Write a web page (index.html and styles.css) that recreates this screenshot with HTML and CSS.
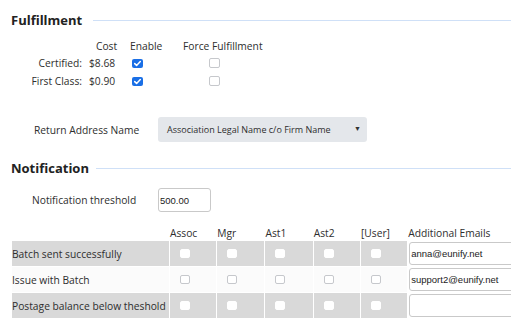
FILE: index.html
```html
<!DOCTYPE html>
<html>
<head>
<meta charset="utf-8">
<link rel="stylesheet" href="styles.css">
</head>
<body>
<div class="page">
  <h2 class="section-title">Fulfillment</h2>
  <div class="ful-grid">
    <div></div>
    <div class="ful-head cost-head">Cost</div>
    <div class="ful-head">Enable</div>
    <div class="ful-head">Force Fulfillment</div>

    <div class="ful-label">Certified:</div>
    <div class="ful-cost">$8.68</div>
    <div class="ful-enable"><span class="cb cb-on"><svg viewBox="0 0 11 9" width="11" height="9"><path d="M2.7 4.6 L4.6 6.4 L8.3 2.6" fill="none" stroke="#fff" stroke-width="1.5" stroke-linecap="round" stroke-linejoin="round"/></svg></span></div>
    <div class="ful-force"><span class="cb"></span></div>

    <div class="ful-label">First Class:</div>
    <div class="ful-cost">$0.90</div>
    <div class="ful-enable"><span class="cb cb-on"><svg viewBox="0 0 11 9" width="11" height="9"><path d="M2.7 4.6 L4.6 6.4 L8.3 2.6" fill="none" stroke="#fff" stroke-width="1.5" stroke-linecap="round" stroke-linejoin="round"/></svg></span></div>
    <div class="ful-force"><span class="cb"></span></div>
  </div>

  <div class="form-row return-row">
    <label class="form-label label-return">Return Address Name</label>
    <div class="select">
      <span class="select-text">Association Legal Name c/o Firm Name</span>
      <span class="select-arrow">&#9660;</span>
    </div>
  </div>

  <h2 class="section-title notif-title">Notification</h2>

  <div class="form-row threshold-row">
    <label class="form-label label-threshold">Notification threshold</label>
    <div class="text-input threshold-input">500.00</div>
  </div>

  <table class="notif-table">
    <colgroup>
      <col class="c-label"><col class="c-a"><col class="c-b"><col class="c-b"><col class="c-a"><col class="c-a"><col class="c-email">
    </colgroup>
    <thead>
      <tr><th></th><th>Assoc</th><th>Mgr</th><th>Ast1</th><th>Ast2</th><th>[User]</th><th>Additional Emails</th></tr>
    </thead>
    <tbody>
      <tr class="row-gray">
        <td class="row-label">Batch sent successfully</td>
        <td class="cb-cell"><span class="cb cb-white"></span></td>
        <td class="cb-cell"><span class="cb cb-white"></span></td>
        <td class="cb-cell"><span class="cb cb-white"></span></td>
        <td class="cb-cell"><span class="cb cb-white"></span></td>
        <td class="cb-cell"><span class="cb cb-white"></span></td>
        <td class="email-cell"><div class="text-input email-input">anna@eunify.net</div></td>
      </tr>
      <tr class="row-light">
        <td class="row-label">Issue with Batch</td>
        <td class="cb-cell"><span class="cb"></span></td>
        <td class="cb-cell"><span class="cb"></span></td>
        <td class="cb-cell"><span class="cb"></span></td>
        <td class="cb-cell"><span class="cb"></span></td>
        <td class="cb-cell"><span class="cb"></span></td>
        <td class="email-cell"><div class="text-input email-input">support2@eunify.net</div></td>
      </tr>
      <tr class="row-gray">
        <td class="row-label">Postage balance below theshold</td>
        <td class="cb-cell"><span class="cb cb-white"></span></td>
        <td class="cb-cell"><span class="cb cb-white"></span></td>
        <td class="cb-cell"><span class="cb cb-white"></span></td>
        <td class="cb-cell"><span class="cb cb-white"></span></td>
        <td class="cb-cell"><span class="cb cb-white"></span></td>
        <td class="email-cell"><div class="text-input email-input"></div></td>
      </tr>
    </tbody>
  </table>
</div>
</body>
</html>
```
FILE: styles.css
```css
html, body {
  margin: 0;
  padding: 0;
  background: #ffffff;
  overflow: hidden;
}
body {
  font-family: "Open Sans", "Noto Sans", sans-serif;
  font-size: 10.25px;
  color: #2e2e2e;
  width: 511px;
  height: 326px;
}
.page {
  padding: 0 0 0 11px;
}
.section-title {
  display: flex;
  align-items: center;
  gap: 11px;
  margin: 12px 0 0 0;
  font-size: 13px;
  line-height: 16px;
  font-weight: 700;
  color: #222222;
}
.section-title::after {
  content: "";
  flex: 1;
  height: 1px;
  background: #cfe0f7;
  margin-top: 1px;
}
.notif-title {
  margin-top: 18px;
  gap: 7px;
}
.ful-grid {
  display: grid;
  grid-template-columns: 71px 48px 53px 100px;
  grid-auto-rows: 18px;
  grid-template-rows: 16px;
  margin-top: 10px;
  line-height: 18px;
  white-space: nowrap;
}
.ful-head {
  line-height: 16px;
}
.cost-head {
  padding-left: 14px;
}
.ful-label {
  text-align: right;
}
.ful-cost {
  padding-left: 7px;
}
.ful-enable, .ful-force {
  display: flex;
  align-items: center;
}
.ful-enable {
  padding-left: 2px;
}
.ful-force {
  padding-left: 26px;
}
.cb {
  display: inline-block;
  box-sizing: border-box;
  width: 11px;
  height: 10px;
  border: 1px solid #c6c8cc;
  border-radius: 2px;
  background: #fff;
}
.cb-on {
  border: none;
  height: 9px;
  background: #1a6fe6;
}
.cb-on svg {
  display: block;
}
.cb-white {
  border-color: #ffffff;
}
.form-row {
  display: flex;
  align-items: center;
}
.form-label {
  width: 147px;
  box-sizing: border-box;
  white-space: nowrap;
}
.label-return {
  padding-left: 23px;
}
.label-threshold {
  padding-left: 21px;
}
.return-row {
  margin-top: 27px;
}
.select {
  width: 209px;
  height: 25px;
  box-sizing: border-box;
  background: #e4e7eb;
  border-radius: 3px;
  display: flex;
  align-items: center;
  justify-content: space-between;
  padding: 0 6px 0 9px;
  font-size: 9px;
}
.select-arrow {
  font-size: 7px;
  color: #333;
  margin-top: -3px;
}
.threshold-row {
  margin-top: 12px;
}
.text-input {
  box-sizing: border-box;
  border: 1px solid #c9c9c9;
  border-radius: 3px;
  background: #fff;
  font-family: "Liberation Sans", Arial, sans-serif;
  font-size: 9.5px;
  color: #222;
  display: flex;
  align-items: center;
  padding-left: 1px;
}
.threshold-input {
  width: 53px;
  height: 24px;
}
.notif-table {
  margin-top: 13px;
  border-collapse: separate;
  border-spacing: 1px;
  table-layout: fixed;
  width: 519px;
}
.c-label { width: 156px; }
.c-a { width: 46px; }
.c-b { width: 47px; }
.c-email { width: 120px; }
.notif-table th {
  font-weight: 400;
  text-align: left;
  height: 14px;
  line-height: 14px;
  padding: 0;
  white-space: nowrap;
}
.notif-table td {
  height: 25px;
  padding: 0;
  line-height: 14px;
}
.row-gray td {
  background: #d9d9d9;
}
.row-light td {
  background: #fbfbfb;
}
.row-label {
  white-space: nowrap;
}
.cb-cell {
  text-align: left;
  vertical-align: middle;
  padding-left: 10px !important;
}
.cb-cell .cb {
  display: block;
  width: 10px;
  height: 9px;
}
.email-cell {
  padding: 1px 0 1px 1px !important;
  background: transparent !important;
  height: 23px !important;
}
.email-input {
  width: 118px;
  height: 23px;
}
```
